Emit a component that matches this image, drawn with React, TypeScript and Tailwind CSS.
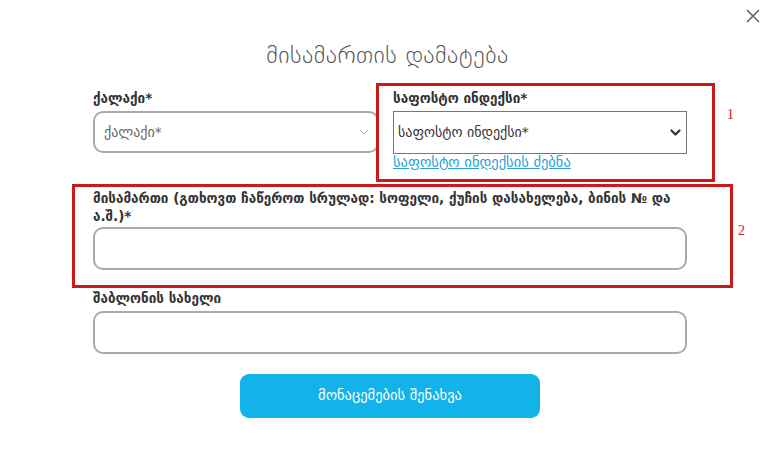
import React from 'react'

const geo = { fontFamily: '"DejaVu Sans", "Noto Sans", sans-serif' }

const ThinChevron = () => (
    <svg width="10" height="6" viewBox="0 0 10 6" fill="none" stroke="#b5b5b5" strokeWidth="1">
        <path d="M1 1l4 4 4-4" />
    </svg>
)

const BoldChevron = () => (
    <svg width="11" height="7" viewBox="0 0 11 7" fill="none" stroke="#333" strokeWidth="2.2" strokeLinecap="round" strokeLinejoin="round">
        <path d="M1.5 1.5l4 4 4-4" />
    </svg>
)

export default function App() {
    return (
        <main className="relative w-[775px] h-[465px] bg-white overflow-hidden" style={geo}>
            <button className="absolute right-[12px] top-[6px] w-[20px] h-[20px] flex items-center justify-center">
                <svg width="14" height="14" viewBox="0 0 14 14" stroke="#666" strokeWidth="1.6">
                    <path d="M1 1l12 12M13 1L1 13" />
                </svg>
            </button>

            <h2 className="pt-[40px] text-center text-[24px] leading-[30px] text-[#555] font-extralight tracking-[0.5px]">
                მისამართის დამატება
            </h2>

            <div className="ml-[93px] w-[594px] mt-[20px] flex flex-col">
                <div className="flex gap-[14px]">
                    <div className="w-[286px] flex flex-col">
                        <label className="text-[13.5px] leading-[16px] font-bold text-[#333]">ქალაქი*</label>
                        <div className="mt-[5px] h-[42px] rounded-[10px] border-2 border-[#aaa] flex items-center justify-between pl-[9px] pr-[8px]">
                            <span className="text-[14px] text-[#666]">ქალაქი*</span>
                            <ThinChevron />
                        </div>
                    </div>
                    <div className="w-[294px] flex flex-col">
                        <label className="text-[13.5px] leading-[16px] font-bold text-[#333]">საფოსტო ინდექსი*</label>
                        <div className="mt-[5px] h-[43px] border border-[#777] flex items-center justify-between pl-[4px] pr-[5px]">
                            <span className="text-[14px] text-[#333]">საფოსტო ინდექსი*</span>
                            <BoldChevron />
                        </div>
                        <a className="text-[14.5px] leading-[16px] text-[#2a9fd6] underline w-fit">საფოსტო ინდექსის ძებნა</a>
                    </div>
                </div>

                <label className="mt-[19px] text-[13.5px] leading-[18px] font-bold text-[#333]">
                    მისამართი (გთხოვთ ჩაწეროთ სრულად: სოფელი, ქუჩის დასახელება, ბინის № და
                    <br />
                    ა.შ.)*
                </label>
                <div className="mt-[2px] h-[43px] rounded-[10px] border-2 border-[#aaa]" />

                <label className="mt-[20px] text-[13.5px] leading-[16px] font-bold text-[#333]">შაბლონის სახელი</label>
                <div className="mt-[5px] h-[43px] rounded-[10px] border-2 border-[#aaa]" />

                <button className="mt-[20px] self-center w-[300px] h-[44px] rounded-[9px] bg-[#12b3e9] text-white text-[14.5px]">
                    მონაცემების შენახვა
                </button>
            </div>

            {/* annotation overlays */}
            <div className="absolute left-[376px] top-[83px] w-[339px] h-[99px] border-[3px] border-[#cc1a1a] pointer-events-none" />
            <span className="absolute left-[727px] top-[104px] text-[14px] text-[#c02020]" style={{ fontFamily: '"Liberation Serif", serif' }}>1</span>
            <div className="absolute left-[72px] top-[184px] w-[661px] h-[104px] border-[3px] border-[#cc1a1a] pointer-events-none" />
            <span className="absolute left-[738px] top-[220px] text-[14px] text-[#c02020]" style={{ fontFamily: '"Liberation Serif", serif' }}>2</span>
        </main>
    )
}
